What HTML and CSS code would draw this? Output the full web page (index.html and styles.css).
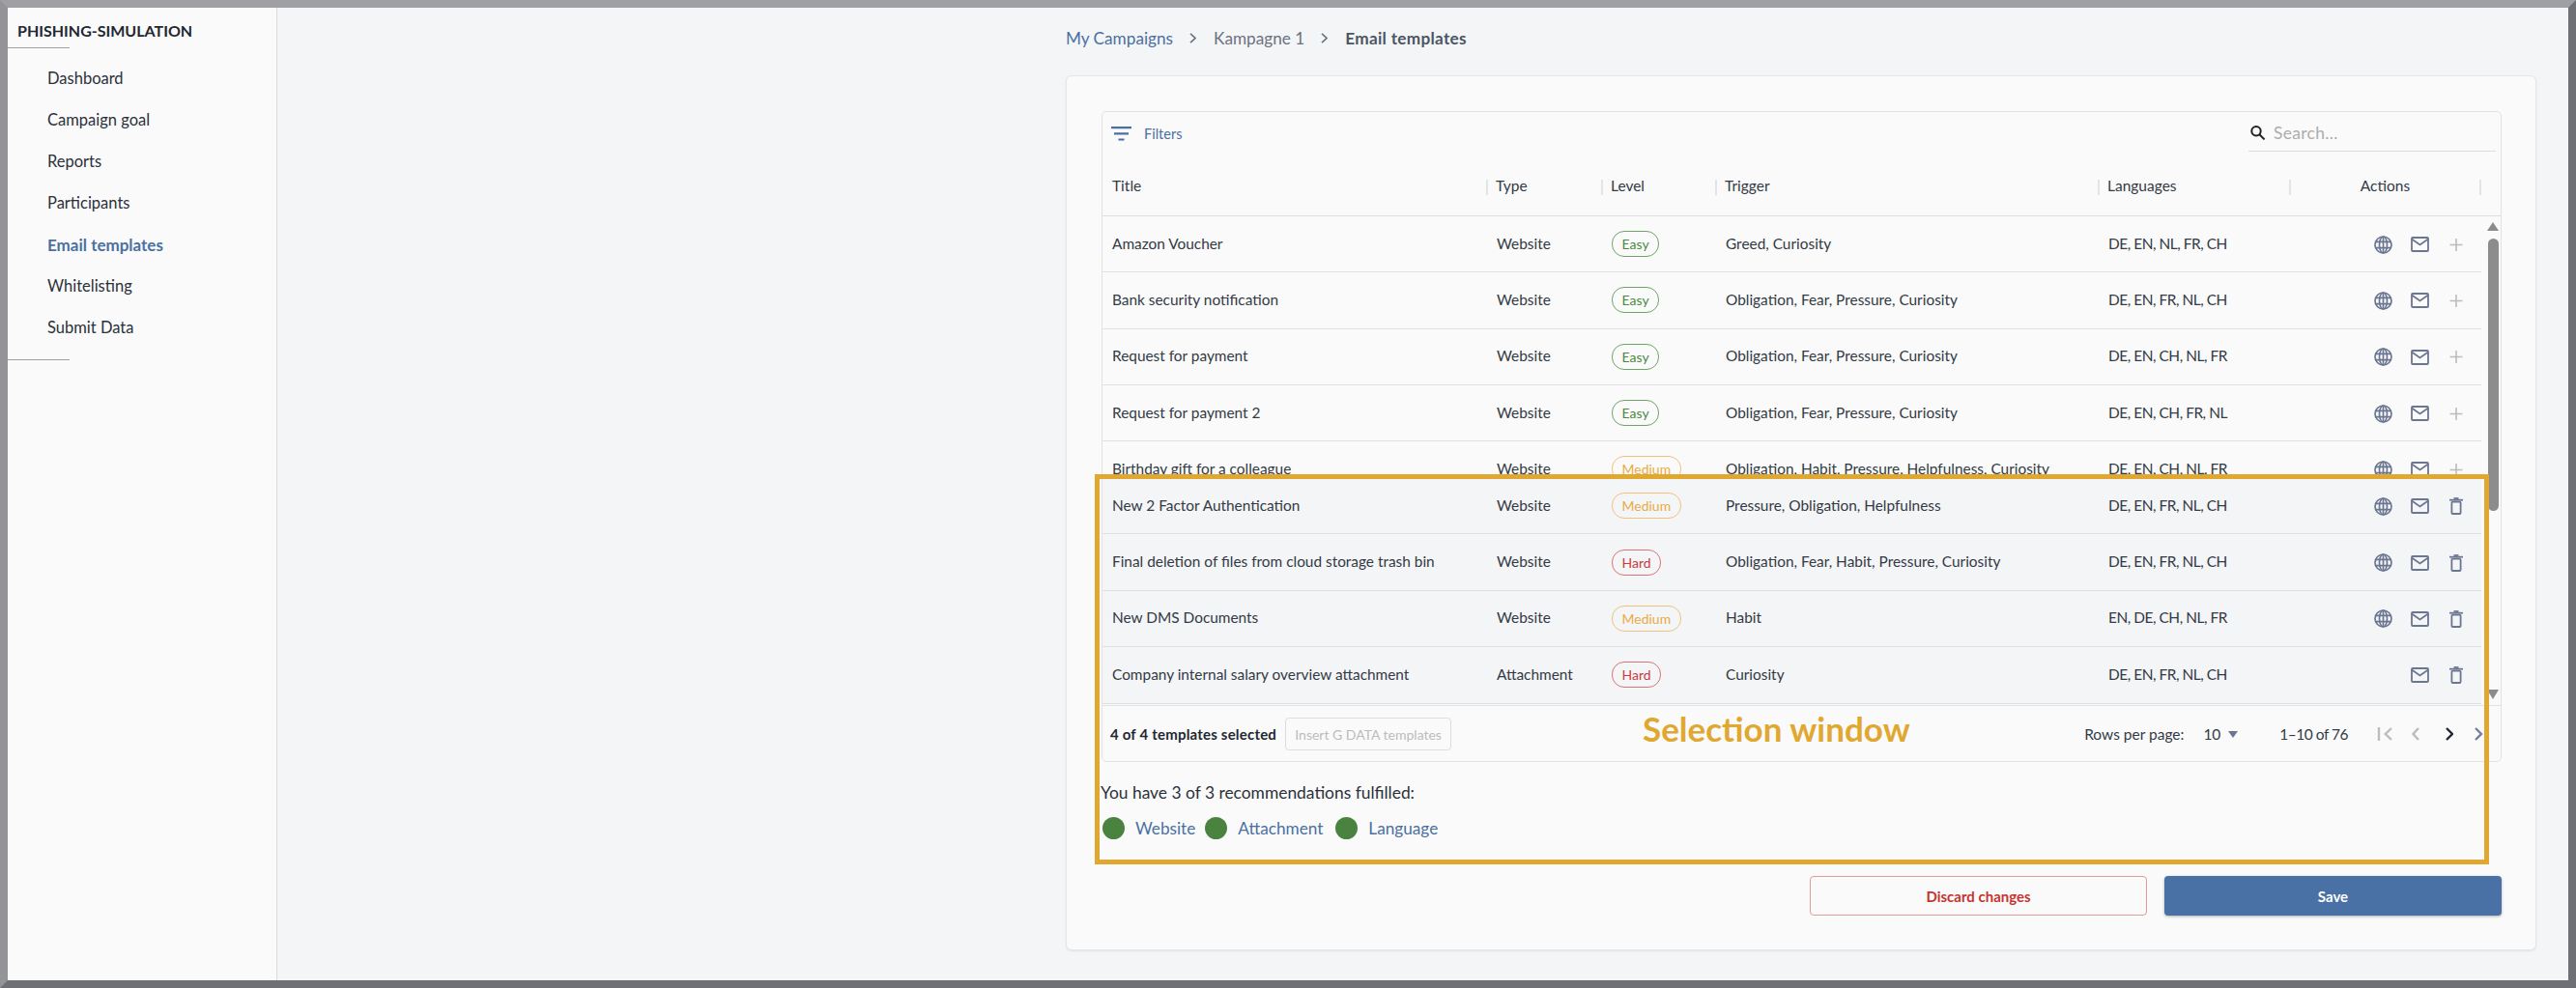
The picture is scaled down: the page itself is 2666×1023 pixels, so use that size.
FILE: index.html
```html
<!DOCTYPE html>
<html lang="en">
<head>
  <meta charset="UTF-8" />
  <title>Email templates</title>
  <link rel="stylesheet" href="styles.css">
</head>
<body>
  <!-- Shared icons -->
  <svg class="icon-defs" aria-hidden="true">
    <symbol id="i-globe" viewBox="0 0 19 19">
      <g fill="none" stroke="currentColor" stroke-width="1.7">
        <circle cx="9.5" cy="9.5" r="8.5"/>
        <ellipse cx="9.5" cy="9.5" rx="4" ry="8.5"/>
        <path d="M9.5 1v17M1.6 6.4h15.8M1.6 12.6h15.8"/>
      </g>
    </symbol>
    <symbol id="i-mail" viewBox="0 0 19 16">
      <g fill="none" stroke="currentColor" stroke-width="1.8">
        <rect x="1" y="1" width="17" height="14" rx="1"/>
        <path d="M1 2.5l8.5 6 8.5-6"/>
      </g>
    </symbol>
    <symbol id="i-plus" viewBox="0 0 14 15">
      <path d="M7 1v13M.5 7.5h13" fill="none" stroke="currentColor" stroke-width="1.6"/>
    </symbol>
    <symbol id="i-trash" viewBox="0 0 14 18">
      <g fill="none" stroke="currentColor" stroke-width="1.8">
        <rect x="2.4" y="4.6" width="9.2" height="12.4" rx="1"/>
        <path d="M0 2.7h14"/>
        <path d="M4.5 1h5"/>
      </g>
    </symbol>
  </svg>

  <div class="app">
    <!-- Sidebar -->
    <aside class="sidebar">
      <div class="brand">PHISHING-SIMULATION</div>
      <nav class="menu">
        <a>Dashboard</a>
        <a>Campaign goal</a>
        <a>Reports</a>
        <a>Participants</a>
        <a class="active">Email templates</a>
        <a>Whitelisting</a>
        <a>Submit Data</a>
      </nav>
    </aside>

    <main class="main">
      <div class="breadcrumb">
        <a class="crumb-link">My Campaigns</a>
        <svg class="crumb-sep" viewBox="0 0 7 11"><path d="M1 .8L6 5.5 1 10.2"/></svg>
        <a>Kampagne 1</a>
        <svg class="crumb-sep" viewBox="0 0 7 11"><path d="M1 .8L6 5.5 1 10.2"/></svg>
        <b>Email templates</b>
      </div>

      <section class="card">
        <div class="panel">
          <div class="toolbar">
            <div class="filters">
              <svg class="filter-icon" viewBox="0 0 21 15"><path d="M0 0h21v2.2H0zM3 6.2h15v2.2H3zM7.5 12.4h6v2.2h-6z"/></svg>
              Filters
            </div>
            <div class="search">
              <svg class="search-icon" viewBox="0 0 16 15"><circle cx="6" cy="5.8" r="4.7"/><path d="M9.4 9.2l5.2 5.2"/></svg>
              <span>Search...</span>
            </div>
          </div>

          <div class="head">
            <div class="head-cell first">Title</div>
            <div class="head-cell">Type</div>
            <div class="head-cell">Level</div>
            <div class="head-cell">Trigger</div>
            <div class="head-cell">Languages</div>
            <div class="head-cell head-actions">Actions</div>
          </div>

          <div class="body">
            <div class="rows">
              <div class="row">
                <div class="cell first">Amazon Voucher</div>
                <div class="cell">Website</div>
                <div class="cell"><span class="badge easy">Easy</span></div>
                <div class="cell">Greed, Curiosity</div>
                <div class="cell langs">DE, EN, NL, FR, CH</div>
                <div class="cell actions">
                  <svg class="ic-globe"><use href="#i-globe"/></svg>
                  <svg class="ic-mail"><use href="#i-mail"/></svg>
                  <svg class="ic-plus"><use href="#i-plus"/></svg>
                </div>
              </div>
              <div class="row">
                <div class="cell first">Bank security notification</div>
                <div class="cell">Website</div>
                <div class="cell"><span class="badge easy">Easy</span></div>
                <div class="cell">Obligation, Fear, Pressure, Curiosity</div>
                <div class="cell langs">DE, EN, FR, NL, CH</div>
                <div class="cell actions">
                  <svg class="ic-globe"><use href="#i-globe"/></svg>
                  <svg class="ic-mail"><use href="#i-mail"/></svg>
                  <svg class="ic-plus"><use href="#i-plus"/></svg>
                </div>
              </div>
              <div class="row">
                <div class="cell first">Request for payment</div>
                <div class="cell">Website</div>
                <div class="cell"><span class="badge easy">Easy</span></div>
                <div class="cell">Obligation, Fear, Pressure, Curiosity</div>
                <div class="cell langs">DE, EN, CH, NL, FR</div>
                <div class="cell actions">
                  <svg class="ic-globe"><use href="#i-globe"/></svg>
                  <svg class="ic-mail"><use href="#i-mail"/></svg>
                  <svg class="ic-plus"><use href="#i-plus"/></svg>
                </div>
              </div>
              <div class="row">
                <div class="cell first">Request for payment 2</div>
                <div class="cell">Website</div>
                <div class="cell"><span class="badge easy">Easy</span></div>
                <div class="cell">Obligation, Fear, Pressure, Curiosity</div>
                <div class="cell langs">DE, EN, CH, FR, NL</div>
                <div class="cell actions">
                  <svg class="ic-globe"><use href="#i-globe"/></svg>
                  <svg class="ic-mail"><use href="#i-mail"/></svg>
                  <svg class="ic-plus"><use href="#i-plus"/></svg>
                </div>
              </div>
              <div class="row row-cut">
                <div class="cell first">Birthday gift for a colleague</div>
                <div class="cell">Website</div>
                <div class="cell"><span class="badge medium">Medium</span></div>
                <div class="cell">Obligation, Habit, Pressure, Helpfulness, Curiosity</div>
                <div class="cell langs">DE, EN, CH, NL, FR</div>
                <div class="cell actions">
                  <svg class="ic-globe"><use href="#i-globe"/></svg>
                  <svg class="ic-mail"><use href="#i-mail"/></svg>
                  <svg class="ic-plus"><use href="#i-plus"/></svg>
                </div>
              </div>
              <div class="row selected">
                <div class="cell first">New 2 Factor Authentication</div>
                <div class="cell">Website</div>
                <div class="cell"><span class="badge medium">Medium</span></div>
                <div class="cell">Pressure, Obligation, Helpfulness</div>
                <div class="cell langs">DE, EN, FR, NL, CH</div>
                <div class="cell actions">
                  <svg class="ic-globe"><use href="#i-globe"/></svg>
                  <svg class="ic-mail"><use href="#i-mail"/></svg>
                  <svg class="ic-trash"><use href="#i-trash"/></svg>
                </div>
              </div>
              <div class="row selected">
                <div class="cell first">Final deletion of files from cloud storage trash bin</div>
                <div class="cell">Website</div>
                <div class="cell"><span class="badge hard">Hard</span></div>
                <div class="cell">Obligation, Fear, Habit, Pressure, Curiosity</div>
                <div class="cell langs">DE, EN, FR, NL, CH</div>
                <div class="cell actions">
                  <svg class="ic-globe"><use href="#i-globe"/></svg>
                  <svg class="ic-mail"><use href="#i-mail"/></svg>
                  <svg class="ic-trash"><use href="#i-trash"/></svg>
                </div>
              </div>
              <div class="row selected">
                <div class="cell first">New DMS Documents</div>
                <div class="cell">Website</div>
                <div class="cell"><span class="badge medium">Medium</span></div>
                <div class="cell">Habit</div>
                <div class="cell langs">EN, DE, CH, NL, FR</div>
                <div class="cell actions">
                  <svg class="ic-globe"><use href="#i-globe"/></svg>
                  <svg class="ic-mail"><use href="#i-mail"/></svg>
                  <svg class="ic-trash"><use href="#i-trash"/></svg>
                </div>
              </div>
              <div class="row selected">
                <div class="cell first">Company internal salary overview attachment</div>
                <div class="cell">Attachment</div>
                <div class="cell"><span class="badge hard">Hard</span></div>
                <div class="cell">Curiosity</div>
                <div class="cell langs">DE, EN, FR, NL, CH</div>
                <div class="cell actions">
                  <svg class="ic-mail"><use href="#i-mail"/></svg>
                  <svg class="ic-trash"><use href="#i-trash"/></svg>
                </div>
              </div>
            </div>

            <div class="scrollbar">
              <div class="arrow-up"></div>
              <div class="thumb"></div>
              <div class="arrow-down"></div>
            </div>
          </div>

          <div class="foot">
            <span class="selected-count">4 of 4 templates selected</span>
            <button class="insert-btn" disabled>Insert G DATA templates</button>
            <div class="pager">
              <span>Rows per page:</span>
              <span class="per-page">10</span>
              <span class="caret"></span>
              <span class="range">1–10 of 76</span>
              <svg class="pg pg-first" viewBox="0 0 16 14"><path d="M2 0v14M15 1L8.8 7l6.2 6"/></svg>
              <svg class="pg pg-prev" viewBox="0 0 8 14"><path d="M7 1L1.5 7 7 13"/></svg>
              <svg class="pg pg-next" viewBox="0 0 8 14"><path d="M1 1l6 6-6 6"/></svg>
              <svg class="pg pg-last" viewBox="0 0 14 14"><path d="M1 1l6 6-6 6M12 0v14"/></svg>
            </div>
          </div>
        </div>

        <p class="rec-text">You have 3 of 3 recommendations fulfilled:</p>
        <div class="rec-list">
          <span class="dot"></span><a>Website</a>
          <span class="dot"></span><a>Attachment</a>
          <span class="dot"></span><a>Language</a>
        </div>

        <div class="buttons">
          <button class="btn btn-discard">Discard changes</button>
          <button class="btn btn-save">Save</button>
        </div>

        <!-- Annotation drawn over the screenshot -->
        <div class="selection-frame">
          <span class="selection-label">Selection window</span>
        </div>
      </section>
    </main>
  </div>
</body>
</html>
```

FILE: styles.css
```css
* {
  box-sizing: border-box;
}
html, body {
  margin: 0;
  height: 100%;
}
body {
  font-family: Lato, "Open Sans", sans-serif;
  color: #333a45;
  background: #f4f5f7;
  overflow: hidden;
}
.icon-defs {
  display: none;
}
.app {
  display: flex;
  height: 1023px;
  border: 8px solid;
  border-color: #9f9fa4 #6f7075 #6f7075 #939398;
}

/* Sidebar */
.sidebar {
  flex: 0 0 279px;
  background: #fafafa;
  border-right: 1px solid #dadada;
}
.brand {
  width: 64px;
  height: 42px;
  padding: 14px 0 0 10px;
  border-bottom: 1px solid #a0a0a0;
  white-space: nowrap;
  font-size: 16px;
  font-weight: 700;
  color: #222831;
}
.menu {
  width: 64px;
  height: 323px;
  padding: 10px 0 0 41px;
  border-bottom: 1px solid #a0a0a0;
}
.menu a {
  display: block;
  height: 43px;
  line-height: 43px;
  white-space: nowrap;
  font-size: 16.5px;
  color: #2b313b;
}
.menu a.active {
  color: #4a70a3;
  font-weight: 700;
  font-size: 17px;
}

/* Main area */
.main {
  flex: 1;
  padding-left: 816px;
  padding-right: 33px;
}
.breadcrumb {
  display: flex;
  align-items: center;
  height: 70px;
  padding: 0 0 8px 0;
  font-size: 17.2px;
  color: #6b7280;
}
.breadcrumb b {
  font-weight: 700;
  color: #4b5563;
  letter-spacing: .3px;
}
.crumb-link {
  color: #4a70a3;
}
.crumb-sep {
  width: 7px;
  height: 11px;
  margin: 0 18px 0 17px;
  fill: none;
  stroke: #6b7280;
  stroke-width: 1.6;
}

.card {
  position: relative;
  height: 906px;
  padding: 36px 35px 0 36px;
  background: #fafafa;
  border: 1px solid #e6e6e8;
  border-radius: 6px;
  box-shadow: 0 1px 2px rgba(0,0,0,0.08);
}

/* Table panel */
.panel {
  height: 674px;
  border: 1px solid #e2e2e2;
  border-radius: 5px;
}
.toolbar {
  display: flex;
  justify-content: space-between;
  height: 48px;
}
.filters {
  display: flex;
  align-items: center;
  gap: 13px;
  height: 15px;
  margin: 15px 0 0 9px;
  font-size: 14.5px;
  color: #4a70a3;
}
.filter-icon {
  width: 21px;
  height: 15px;
  fill: #4a70a3;
}
.search {
  display: flex;
  align-items: center;
  gap: 8px;
  width: 256px;
  height: 34px;
  margin: 7px 5px 0 0;
  padding: 0 0 4px 2px;
  border-bottom: 1px solid #dcdcdc;
  font-size: 17.5px;
  letter-spacing: .3px;
  color: #adadad;
}
.search-icon {
  width: 16px;
  height: 15px;
  fill: none;
  stroke: #222;
  stroke-width: 2;
}

.head, .row {
  display: grid;
  grid-template-columns: 397px 119px 118px 396px 198px 199px;
}
.head {
  grid-template-columns: 397px 119px 118px 396px 198px 199px 1fr;
  align-items: center;
  height: 60px;
  border-bottom: 1px solid #dedede;
  font-size: 15.5px;
}
.head-cell {
  height: 16px;
  line-height: 13px;
  padding-left: 8px;
  border-left: 2px solid #e4e4e4;
}
.head-cell.first {
  padding-left: 10px;
  border-left: 0;
}
.head-actions {
  padding-left: 0;
  text-align: center;
  border-right: 2px solid #e4e4e4;
}

.body {
  display: flex;
  height: 505px;
}
.rows {
  width: 1427px;
}
.row {
  grid-auto-rows: 57.3px;
  height: 58.3px;
  overflow: hidden;
  align-items: center;
  border-bottom: 1px solid #e0e0e0;
  font-size: 15.4px;
}
.row-cut {
  height: 38px;
  border-bottom: 0;
}
.row.selected {
  background: #f4f5f7;
}
.row.selected:last-child {
  height: 58.5px;
}
.cell {
  padding: 0 0 2px 11px;
  white-space: nowrap;
}
.cell.first {
  padding-left: 10px;
}
.langs {
  letter-spacing: -.45px;
}
.badge {
  display: inline-block;
  height: 27px;
  line-height: 25px;
  padding: 0 9.5px;
  border: 1px solid;
  border-radius: 13px;
  font-size: 14px;
  vertical-align: top;
  margin-top: 2px;
}
.badge.easy {
  color: #4a8a3f;
  border-color: #6fa567;
}
.badge.medium {
  color: #e9ab45;
  border-color: #f1c27f;
}
.badge.hard {
  color: #c83c3c;
  border-color: #da7474;
}
.actions {
  display: flex;
  justify-content: flex-end;
  align-items: center;
  padding: 1px 19px 0 0;
  color: #6b7690;
}
.ic-globe {
  width: 19px;
  height: 19px;
  margin-right: 19px;
}
.ic-mail {
  width: 19px;
  height: 16px;
  margin-right: 21px;
}
.ic-plus {
  width: 14px;
  height: 15px;
  color: #bcbcbc;
}
.ic-trash {
  width: 14px;
  height: 18px;
}

/* Scrollbar column */
.scrollbar {
  flex: 1;
  position: relative;
  display: flex;
  flex-direction: column;
  align-items: center;
  padding: 6px 0 0 4px;
}
.arrow-up, .arrow-down {
  width: 0;
  height: 0;
  border-left: 6.5px solid transparent;
  border-right: 6.5px solid transparent;
}
.arrow-up {
  border-bottom: 9px solid #8c8c8c;
}
.arrow-down {
  margin-top: 185px;
  border-top: 10px solid #8c8c8c;
}
.thumb {
  width: 11px;
  height: 282px;
  margin-top: 8px;
  background: #8c8c8c;
  border-radius: 6px;
}

/* Table footer */
.foot {
  display: flex;
  align-items: center;
  height: 59px;
  padding: 0 13px 0 8px;
  border-top: 1px solid #e2e2e2;
  margin-top: 1px;
}
.selected-count {
  font-size: 15px;
  font-weight: 700;
  letter-spacing: .2px;
  color: #222831;
}
.insert-btn {
  width: 172px;
  height: 34px;
  margin: 0 0 0 9px;
  padding: 0;
  background: #fafafa;
  border: 1px solid #dddddd;
  border-radius: 4px;
  font-family: inherit;
  font-size: 14px;
  color: #bcbcbc;
}
.pager {
  display: flex;
  align-items: center;
  margin-left: auto;
  font-size: 15.5px;
}
.per-page {
  margin-left: 20px;
}
.caret {
  width: 0;
  height: 0;
  margin-left: 8px;
  border-left: 5.5px solid transparent;
  border-right: 5.5px solid transparent;
  border-top: 7px solid #6b7690;
}
.range {
  margin: 0 30px 0 43px;
  letter-spacing: -.5px;
}
.pg {
  height: 14px;
  fill: none;
  stroke-width: 2.4;
}
.pg-first {
  width: 16px;
  stroke: #bdbdbd;
}
.pg-prev {
  width: 8px;
  margin-left: 20px;
  stroke: #bdbdbd;
}
.pg-next {
  width: 8px;
  margin-left: 27px;
  stroke: #222831;
}
.pg-last {
  width: 14px;
  margin-left: 22px;
  stroke: #74809b;
}

/* Recommendations */
.rec-text {
  margin: 20px 0 0 -1px;
  height: 24px;
  line-height: 24px;
  font-size: 17.4px;
  color: #2b313b;
}
.rec-list {
  display: flex;
  align-items: center;
  height: 23px;
  margin: 13px 0 0 1px;
  font-size: 17.2px;
  color: #4a70a3;
}
.rec-list .dot {
  width: 23px;
  height: 23px;
  margin-right: 11px;
  background: #4a8340;
  border-radius: 50%;
}
.rec-list a {
  margin-right: 10px;
}
.rec-list a:nth-of-type(2) {
  margin-right: 13px;
}

.buttons {
  display: flex;
  justify-content: flex-end;
  gap: 18px;
  margin-top: 38px;
}
.btn {
  width: 349px;
  height: 41px;
  border-radius: 4px;
  font-family: inherit;
  font-size: 15px;
  font-weight: 700;
}
.btn-discard {
  background: #fafafa;
  border: 1px solid #e09b9b;
  color: #c5352f;
}
.btn-save {
  background: #4a71a5;
  border: 0;
  color: #fff;
  box-shadow: 0 1px 3px rgba(0,0,0,0.3);
}

/* Orange annotation */
.selection-frame {
  position: absolute;
  left: 29px;
  top: 412px;
  width: 1443px;
  height: 404px;
  border: 5px solid #e0a830;
}
.selection-label {
  position: absolute;
  left: 562px;
  top: 238px;
  line-height: 40px;
  white-space: nowrap;
  font-size: 35px;
  font-weight: 700;
  color: #e0a830;
}
```
